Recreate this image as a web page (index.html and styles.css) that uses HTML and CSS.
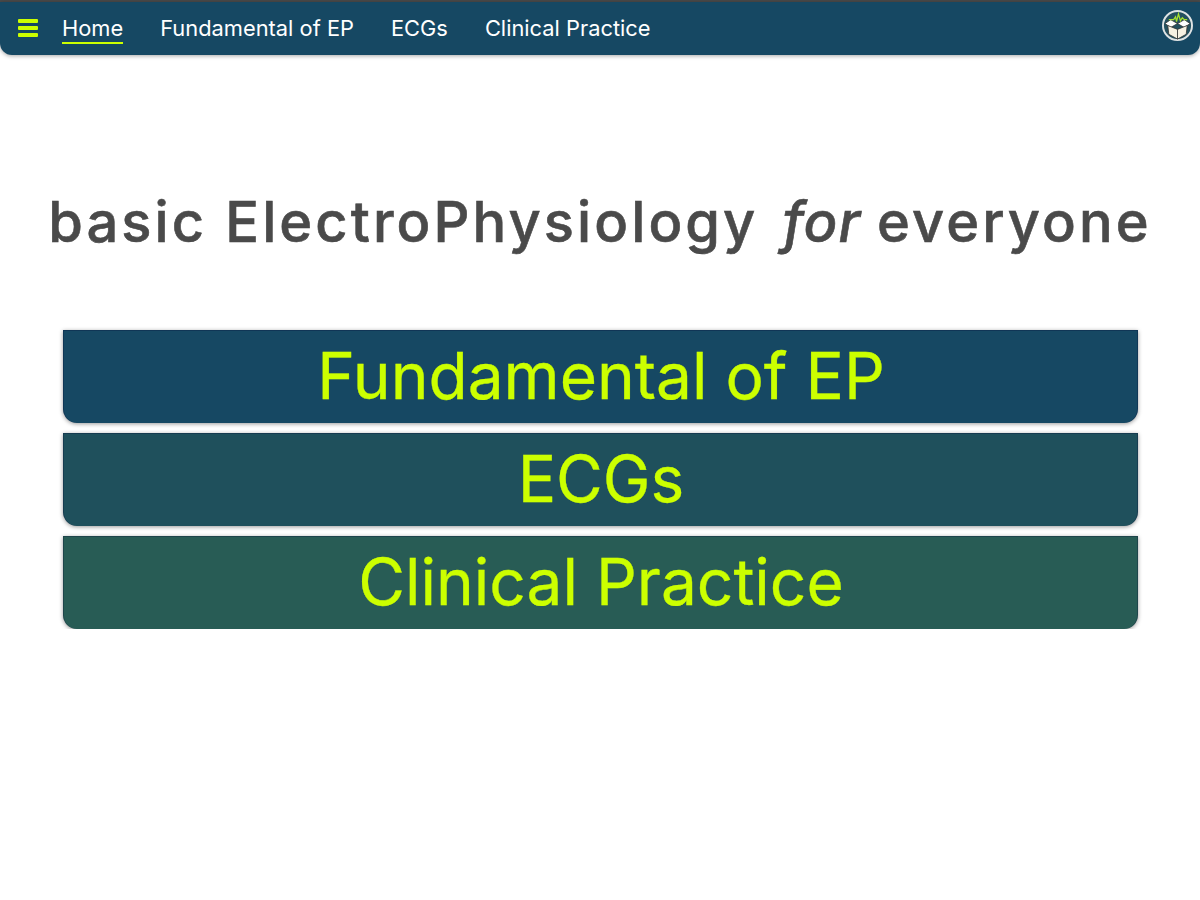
FILE: index.html
```html
<!DOCTYPE html>
<html lang="en">
<head>
    <meta charset="UTF-8">
    <meta name="viewport" content="width=device-width, initial-scale=1.0">
    <title>basic ElectroPhysiology for everyone</title>
    <link rel="stylesheet" href="styles.css">
</head>
<body>
    <div class="topline"></div>
    <nav class="navbar">
        <div class="burger">
            <span></span>
            <span></span>
            <span></span>
        </div>
        <a class="nav-link active" href="#">Home</a>
        <a class="nav-link" href="#">Fundamental of EP</a>
        <a class="nav-link" href="#">ECGs</a>
        <a class="nav-link" href="#">Clinical Practice</a>
        <svg class="logo" viewBox="0 0 32 32">
            <circle cx="16" cy="16" r="15" fill="#24505f" stroke="#dfe3e4" stroke-width="2"/>
            <path d="M3 14 L9 10 L16 14 L23 10 L29 14 L23 18 L16 14 L9 18 Z" fill="#fff" stroke="#333" stroke-width="0.8"/>
            <path d="M6 16 L16 20 L16 30 L7 25 Z" fill="#f6f1e2" stroke="#333" stroke-width="0.8"/>
            <path d="M26 16 L16 20 L16 30 L25 25 Z" fill="#f6f1e2" stroke="#333" stroke-width="0.8"/>
            <path d="M7 10 L12 10 L14 7 L15 12 L17 4 L19 11 L21 8 L23 10 L26 10" fill="none" stroke="#a6e22e" stroke-width="1.3"/>
        </svg>
    </nav>

    <h1 class="title">basic ElectroPhysiology <em>for</em> everyone</h1>

    <div class="cards">
        <a class="card card-ep" href="#">Fundamental of EP</a>
        <a class="card card-ecg" href="#">ECGs</a>
        <a class="card card-clinical" href="#">Clinical Practice</a>
    </div>
</body>
</html>
```

FILE: styles.css
```css
body { margin: 0; background: #fff; font-family: Inter, "Liberation Sans", sans-serif; }
a { text-decoration: none; }

.topline { height: 2px; background: #4a4a4a; }

.navbar { display: flex; align-items: center; height: 53px; padding: 0 7px 0 18px; background: #164863; border-radius: 0 0 12px 12px; box-shadow: 0 1px 4px rgba(0, 0, 0, 0.35); }
.burger { display: flex; flex-direction: column; gap: 3px; width: 20px; margin-right: 24px; margin-bottom: 1px; }
.burger span { height: 4px; background: #ccff00; border-radius: 1px; }
.nav-link { color: #fff; font-size: 21.85px; line-height: 28px; margin-right: 37px; border-bottom: 2px solid transparent; }
.nav-link.active { border-bottom-color: #ccff00; }
.logo { width: 31px; height: 31px; margin-left: auto; margin-bottom: 7px; }

.title { margin: 135px 0 0; text-align: center; color: #4a4a4a; font-size: 56px; line-height: 64px; font-weight: 500; letter-spacing: 3.1px; -webkit-text-stroke: 0.6px #4a4a4a; white-space: nowrap; }
.title em { letter-spacing: 1px; margin: 0 -2px 0 6px; }

.cards { display: flex; flex-direction: column; gap: 10px; margin: 76px 62px 0 63px; }
.card { display: block; box-sizing: border-box; height: 93px; padding-left: 1px; line-height: 90px; text-align: center; color: #ccff00; font-size: 64px; -webkit-text-stroke: 0.3px #ccff00; border: 1px solid rgba(0, 0, 50, 0.25); border-bottom: none; border-radius: 0 0 14px 14px; box-shadow: 0 1px 4px rgba(0, 0, 0, 0.4); }
.card-ep { background: #164863; }
.card-ecg { background: #1f505c; }
.card-clinical { background: #285c55; }
```
